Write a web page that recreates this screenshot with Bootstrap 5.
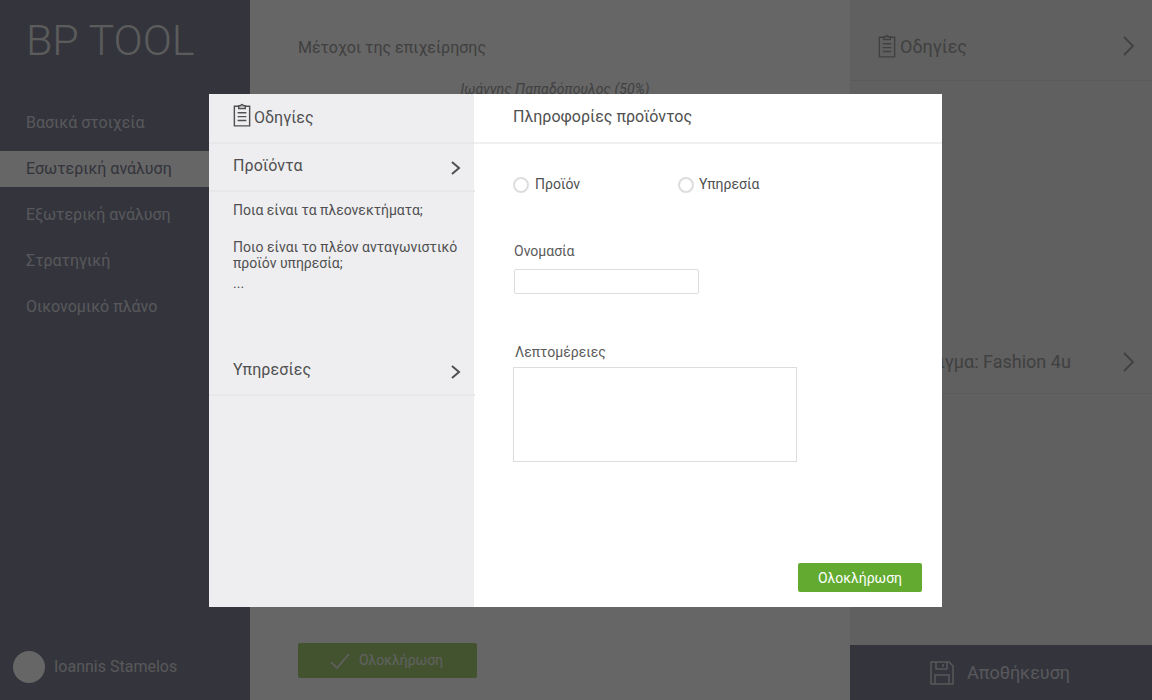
<!DOCTYPE html>
<html lang="el">
<head>
    <meta charset="UTF-8">
    <meta name="viewport" content="width=device-width, initial-scale=1.0">
    <title>BP Tool</title>
    <link rel="stylesheet" href="https://cdn.jsdelivr.net/npm/bootstrap@5.3.0/dist/css/bootstrap.min.css">
    <style>
        html, body { height: 100%; overflow: hidden; }
        body { font-family: Roboto, "Noto Sans", sans-serif; background: #fff; color: #505050; }
        .modal-backdrop.show { opacity: .6; }

        .page-wrap { height: 700px; }
        .side-menu { width: 250px; background: #808296; color: #ddd; }
        .brand-name { font-size: 43px; font-weight: 300; line-height: 50px; padding: 15px 0 0 26px; margin-bottom: 40px; color: #e4e4e4; }
        .menu-list { gap: 10px; }
        .menu-item { height: 36px; line-height: 36px; padding-left: 26px; font-size: 16px; color: #dcdce0; }
        .menu-item.is-active { background: #fff; color: #808296; }
        .user-line { padding: 0 0 17px 13px; gap: 9px; font-size: 16px; color: #ddd; }
        .user-pic { width: 32px; height: 32px; border-radius: 50%; background: #fff; }

        .main-area { width: 600px; background: #fff; padding: 0 48px; color: #a0a0a0; }
        .main-title { font-size: 16px; padding-top: 38px; margin-bottom: 24px; line-height: 19px; }
        .main-owner { font-size: 14px; font-style: italic; line-height: 17px; padding-left: 10px; letter-spacing: .1px; }
        .done-big { width: 179px; height: 35px; margin-bottom: 22px; padding-right: 2px; background: #a8d076; border-radius: 2px; color: #f0f0f0; font-size: 14px; gap: 9px; }

        .side-help { width: 302px; background: #f0f0f0; color: #a0a0a0; }
        .help-row { padding: 0 17px 0 28px; font-size: 18px; border-bottom: 1px solid #e2e2e2; }
        .help-top { height: 81px; padding-top: 12px; padding-bottom: 0; }
        .help-example { height: 64px; margin-top: 249px; padding-left: 26px; padding-top: 0; }
        .save-bar { height: 55px; background: #808296; color: #dcdce0; font-size: 18px; gap: 13px; padding-right: 2px; }

        .modal-dialog { max-width: 734px; }
        .modal-content { width: 733px; height: 513px; border: 0; border-radius: 0; background: #fff; overflow: visible; }
        .guide-col { width: 265px; background: #eeeef0; }
        .guide-head { height: 50px; padding-left: 24px; gap: 3px; font-size: 16px; border-bottom: 2px solid #e8e8ea; }
        .guide-icon { margin-top: -5px; }
        .guide-row { height: 48px; padding: 0 14px 0 24px; font-size: 16px; border-bottom: 2px solid #e8e8ea; margin-right: -1px; letter-spacing: .1px; }
        .guide-row span { margin-top: -2px; }
        .guide-row svg { margin-top: 2px; }
        .guide-text { padding: 10px 15px 0 24px; height: 156px; font-size: 14px; line-height: 16px; }
        .guide-text p { margin-bottom: 21px; }
        .guide-more { margin-top: 4px; }

        .info-col { min-width: 0; }
        .info-head { height: 50px; padding-left: 39px; font-size: 16px; line-height: 45px; border-bottom: 2px solid #f0f0f0; }
        .info-form { padding: 33px 20px 15px 39px; font-size: 14px; }
        .radio-line { height: 16px; margin-bottom: 50px; }
        .radio-pick { width: 165px; gap: 6px; }
        .radio-pick + .radio-pick { gap: 5px; }
        .form-check-input.radio-box { width: 16px; height: 16px; margin: 0; border: 2px solid #ddd; background-color: #fff; flex: none; }
        .form-caption { display: block; margin: 0 0 9px 1px; line-height: 17px; color: #5a5a5a; }
        .form-caption.caption-details { margin: 0 0 6px 2px; }
        .form-control.name-box { width: 185px; height: 25px; margin-left: 1px; margin-bottom: 50px; border: 1px solid #ddd; border-radius: 2px; padding: 2px 6px; }
        .form-control.text-box { width: 284px; height: 95px; border: 1px solid #ddd; border-radius: 0; padding: 4px 6px; resize: none; }
        .btn.done-btn { width: 124px; height: 29px; padding: 2px 0 0; background: #62ab30; border: 0; border-radius: 2px; color: #fff; font-size: 14px; }
    </style>
</head>
<body>
    <!-- Σελίδα πίσω από το modal -->
    <div class="page-wrap d-flex">
        <div class="side-menu d-flex flex-column">
            <div class="brand-name">BP TOOL</div>
            <div class="menu-list d-flex flex-column">
                <div class="menu-item">Βασικά στοιχεία</div>
                <div class="menu-item is-active">Εσωτερική ανάλυση</div>
                <div class="menu-item">Εξωτερική ανάλυση</div>
                <div class="menu-item">Στρατηγική</div>
                <div class="menu-item">Οικονομικό πλάνο</div>
            </div>
            <div class="user-line d-flex align-items-center mt-auto">
                <div class="user-pic"></div>
                <span>Ioannis Stamelos</span>
            </div>
        </div>

        <div class="main-area d-flex flex-column">
            <div class="main-title">Μέτοχοι της επιχείρησης</div>
            <div class="main-owner text-center">Ιωάννης Παπαδόπουλος (50%)</div>
            <div class="done-big d-flex align-items-center justify-content-center mt-auto">
                <svg width="20" height="16" viewBox="0 0 20 16" fill="none" stroke="#f0f0f0" stroke-width="1.6"><path d="M1 9l6 6L19 1"/></svg>
                <span>Ολοκλήρωση</span>
            </div>
        </div>

        <div class="side-help d-flex flex-column">
            <div class="help-row help-top d-flex align-items-center">
                <svg class="me-1" width="18" height="24" viewBox="0 0 16 22" fill="none" stroke="#a0a0a0" stroke-width="1.3"><path d="M5 3H1v18h14V3h-4M5 5V2.500h2C7 .8 9 .8 9 2.500h2V5zM4 9h8M4 12.500h8M4 16h8"/></svg>
                <span>Οδηγίες</span>
                <svg class="ms-auto" width="12" height="20" viewBox="0 0 12 20" fill="none" stroke="#a0a0a0" stroke-width="1.8"><path d="M1 1l9 9-9 9"/></svg>
            </div>
            <div class="help-row help-example d-flex align-items-center">
                <span>Παράδειγμα: Fashion 4u</span>
                <svg class="ms-auto" width="12" height="20" viewBox="0 0 12 20" fill="none" stroke="#a0a0a0" stroke-width="1.8"><path d="M1 1l9 9-9 9"/></svg>
            </div>
            <div class="save-bar d-flex align-items-center justify-content-center mt-auto">
                <svg width="24" height="24" viewBox="0 0 24 24" fill="none" stroke="#dcdce0" stroke-width="1.5"><path d="M1 1h18l4 4v18H1zM6 1v7h11V1M13 3v3M5 23v-9h14v9"/></svg>
                <span>Αποθήκευση</span>
            </div>
        </div>
    </div>

    <div class="modal-backdrop show"></div>

    <!-- Modal πληροφοριών προϊόντος -->
    <div class="modal d-block" tabindex="-1">
        <div class="modal-dialog modal-dialog-centered">
            <div class="modal-content flex-row">
                <div class="guide-col d-flex flex-column">
                    <div class="guide-head d-flex align-items-center">
                        <svg class="guide-icon" width="18" height="24" viewBox="0 0 16 22" fill="none" stroke="#505050" stroke-width="1.3"><path d="M5 3H1v18h14V3h-4M5 5V2.500h2C7 .8 9 .8 9 2.500h2V5zM4 9h8M4 12.500h8M4 16h8"/></svg>
                        <span>Οδηγίες</span>
                    </div>
                    <div class="guide-row d-flex align-items-center justify-content-between">
                        <span>Προϊόντα</span>
                        <svg width="10" height="14" viewBox="0 0 10 14" fill="none" stroke="#505050" stroke-width="2"><path d="M1 1l7 6-7 6"/></svg>
                    </div>
                    <div class="guide-text">
                        <p>Ποια είναι τα πλεονεκτήματα;</p>
                        <div>Ποιο είναι το πλέον ανταγωνιστικό προϊόν υπηρεσία;</div>
                        <div class="guide-more">...</div>
                    </div>
                    <div class="guide-row d-flex align-items-center justify-content-between">
                        <span>Υπηρεσίες</span>
                        <svg width="10" height="14" viewBox="0 0 10 14" fill="none" stroke="#505050" stroke-width="2"><path d="M1 1l7 6-7 6"/></svg>
                    </div>
                </div>
                <div class="info-col flex-grow-1 d-flex flex-column">
                    <div class="info-head">Πληροφορίες προϊόντος</div>
                    <form class="info-form flex-grow-1 d-flex flex-column">
                        <div class="radio-line d-flex">
                            <label class="radio-pick d-flex align-items-center"><input class="form-check-input radio-box" type="radio" name="kind"><span>Προϊόν</span></label>
                            <label class="radio-pick d-flex align-items-center"><input class="form-check-input radio-box" type="radio" name="kind"><span>Υπηρεσία</span></label>
                        </div>
                        <label class="form-caption" for="name-input">Ονομασία</label>
                        <input id="name-input" class="form-control name-box" type="text">
                        <label class="form-caption caption-details" for="details-input">Λεπτομέρειες</label>
                        <textarea id="details-input" class="form-control text-box"></textarea>
                        <div class="d-flex justify-content-end mt-auto">
                            <button type="button" class="btn done-btn">Ολοκλήρωση</button>
                        </div>
                    </form>
                </div>
            </div>
        </div>
    </div>

    <script src="https://cdn.jsdelivr.net/npm/bootstrap@5.3.0/dist/js/bootstrap.bundle.min.js"></script>
</body>
</html>
